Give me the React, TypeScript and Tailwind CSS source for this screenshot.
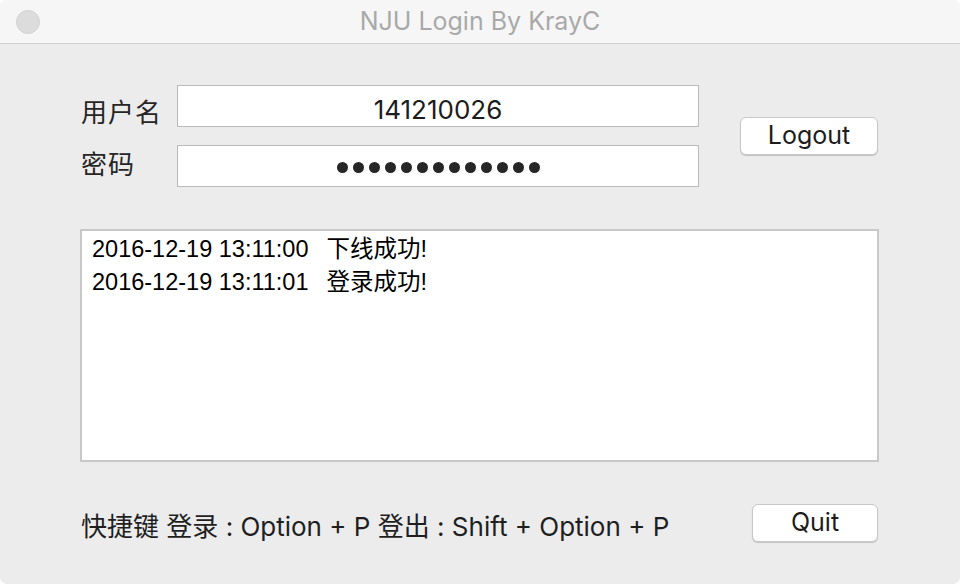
import React from "react";

const ui = "font-['Inter','Noto_Sans_CJK_SC',sans-serif]";
const mono = "font-['Liberation_Sans','Noto_Sans_CJK_SC',sans-serif]";

function Btn({ label, w }: { label: string; w: string }) {
  return (
    <div
      className={`${w} h-[38px] flex items-center justify-center rounded-[6px] bg-white border border-[#c8c8c8] shadow-[0_1px_1px_rgba(0,0,0,0.18)] text-[25px] text-[#1c1c1c] ${ui}`}
    >
      {label}
    </div>
  );
}

function LogLine({ time, msg }: { time: string; msg: string }) {
  return (
    <div className="flex whitespace-pre">
      <span>{time}</span>
      <span className="ml-[18px]">{msg}</span>
    </div>
  );
}

export default function App() {
  const dots = Array.from({ length: 13 });
  return (
    <div className="w-[960px] h-[584px] bg-white">
      <div className="w-[960px] h-[584px] rounded-[7px] overflow-hidden bg-[#ececec] flex flex-col">
        {/* title bar */}
        <div className="h-[44px] bg-[#f6f6f6] border-b border-[#d0d0d0] flex items-center relative">
          <div className="ml-[16px] w-[24px] h-[24px] rounded-full bg-[#dcdcdc] border border-[#d2d2d2]" />
          <div
            className={`flex-1 text-center pr-[40px] text-[25px] text-[#a9a9a9] ${ui}`}
          >
            NJU Login By KrayC
          </div>
        </div>

        {/* body */}
        <div className="flex-1 flex flex-col px-[80px]">
          <div className="flex items-center mt-[41px]">
            <div className="flex flex-col gap-[18px]">
              <div className="flex items-center h-[42px]">
                <div
                  className={`w-[97px] h-[42px] flex items-center pl-[1px] pt-[13px] tracking-[1px] text-[26px] text-[#262626] whitespace-nowrap ${ui}`}
                >
                  用户名
                </div>
                <div
                  className={`w-[522px] h-[42px] bg-white border border-[#b9b9b9] flex items-center justify-center pt-[6px] text-[26px] text-[#1c1c1c] ${ui}`}
                >
                  141210026
                </div>
              </div>
              <div className="flex items-center h-[42px]">
                <div
                  className={`w-[97px] h-[42px] flex items-center pl-[1px] pb-[4px] tracking-[1px] text-[26px] text-[#262626] whitespace-nowrap ${ui}`}
                >
                  密码
                </div>
                <div className="w-[522px] h-[42px] bg-white border border-[#b9b9b9] flex items-center justify-center pt-[2px]">
                  <div className="flex gap-[5px]">
                    {dots.map((_, i) => (
                      <div
                        key={i}
                        className="w-[11px] h-[11px] rounded-full bg-[#262626]"
                      />
                    ))}
                  </div>
                </div>
              </div>
            </div>
            <div className="ml-[41px]">
              <Btn label="Logout" w="w-[138px]" />
            </div>
          </div>

          {/* log */}
          <div
            className={`mt-[42px] w-[799px] h-[233px] bg-white border-2 border-[#c8c8c8] pl-[10px] pt-[2px] flex flex-col text-[23.5px] leading-[33px] text-black ${mono}`}
          >
            <LogLine time="2016-12-19 13:11:00" msg="下线成功!" />
            <LogLine time="2016-12-19 13:11:01" msg="登录成功!" />
          </div>

          {/* footer */}
          <div className="mt-[41px] h-[39px] flex items-center justify-between">
            <div
              className={`ml-[1px] h-[39px] flex items-center pt-[8px] text-[26px] text-[#1f1f1f] whitespace-pre ${ui}`}
            >
              快捷键 登录 : Option + P 登出 : Shift + Option + P
            </div>
            <div className="mr-[2px]">
              <Btn label="Quit" w="w-[126px]" />
            </div>
          </div>
        </div>
      </div>
    </div>
  );
}
